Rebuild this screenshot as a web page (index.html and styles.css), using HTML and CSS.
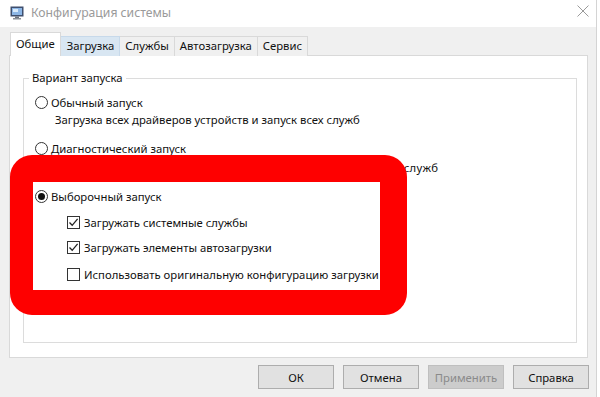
FILE: index.html
```html
<!DOCTYPE html>
<html lang="ru">
<head>
<meta charset="utf-8">
<title>Конфигурация системы</title>
<link rel="stylesheet" href="styles.css">
</head>
<body>
<div class="window">
  <div class="titlebar">
    <svg class="app-icon" width="14" height="14" viewBox="0 0 14 14">
      <rect x="0.5" y="0.5" width="13" height="10" fill="#3f4f6e"/>
      <rect x="2" y="2" width="10" height="7" fill="#8cb6e6"/>
      <rect x="3" y="3" width="5" height="3" fill="#d9ebfb"/>
      <rect x="5" y="10.5" width="4" height="1.5" fill="#6d7480"/>
      <rect x="3" y="12" width="8" height="1.5" fill="#8a9099"/>
    </svg>
    <span class="title">Конфигурация системы</span>
    <svg class="close" width="12" height="12" viewBox="0 0 12 12">
      <path d="M0.5 0.5 L11.5 11.5 M11.5 0.5 L0.5 11.5" stroke="#9a9a9a" stroke-width="1" fill="none"/>
    </svg>
  </div>

  <div class="body">
    <div class="tabs">
      <div class="tab selected">Общие</div>
      <div class="tab hover">Загрузка</div>
      <div class="tab">Службы</div>
      <div class="tab">Автозагрузка</div>
      <div class="tab">Сервис</div>
    </div>

    <div class="panel">
      <fieldset class="group">
        <legend>Вариант запуска</legend>
        <div class="options">
          <div class="row r1"><span class="radio"></span>Обычный запуск</div>
          <div class="desc d1">Загрузка всех драйверов устройств и запуск всех служб</div>
          <div class="row r2"><span class="radio"></span>Диагностический запуск</div>
          <div class="desc d2">Загрузка только основных драйверов устройств и основных служб</div>
          <div class="row r3"><span class="radio checked"></span>Выборочный запуск</div>
          <div class="sub">
            <div class="row c1"><span class="check on"><svg width="11" height="11" viewBox="0 0 11 11"><path d="M1.5 5.5 L4.2 8.3 L9.6 1.8" stroke="#222" stroke-width="1.3" fill="none"/></svg></span>Загружать системные службы</div>
            <div class="row c2"><span class="check on"><svg width="11" height="11" viewBox="0 0 11 11"><path d="M1.5 5.5 L4.2 8.3 L9.6 1.8" stroke="#222" stroke-width="1.3" fill="none"/></svg></span>Загружать элементы автозагрузки</div>
            <div class="row c3"><span class="check"></span>Использовать оригинальную конфигурацию загрузки</div>
          </div>
        </div>
      </fieldset>
      <div class="highlight"></div>
    </div>

    <div class="buttons">
      <button class="btn">ОК</button>
      <button class="btn">Отмена</button>
      <button class="btn disabled">Применить</button>
      <button class="btn">Справка</button>
    </div>
  </div>
</div>
</body>
</html>
```

FILE: styles.css
```css
* { box-sizing: border-box; }

html, body {
  margin: 0;
  padding: 0;
}

body {
  width: 600px;
  height: 397px;
  overflow: hidden;
  background: #ffffff;
  font-family: "Noto Sans", "Open Sans", sans-serif;
  font-size: 11.3px;
  color: #111;
}

.window {
  width: 597px;
  height: 397px;
  background: #f0f0f0;
  border-right: 1px solid #d4d4d4;
}

.titlebar {
  height: 27px;
  background: #ffffff;
  display: flex;
  align-items: center;
  padding-left: 10px;
  padding-right: 7px;
}

.app-icon { flex: none; margin-top: -2px; }

.title {
  margin-left: 7px;
  font-size: 12.2px;
  color: #9a9a9a;
  margin-top: -2px;
}

.close { margin-left: auto; margin-top: -6px; }

.body {
  padding: 5px 8px 0 9px;
}

.tabs {
  display: flex;
  align-items: flex-end;
  height: 24px;
  padding-left: 1px;
  position: relative;
  z-index: 1;
  margin-bottom: -1px;
}

.tab {
  height: 20px;
  line-height: 18px;
  padding: 0 5px;
  border: 1px solid #d9d9d9;
  border-left: none;
  border-bottom: none;
  background: #f0f0f0;
  color: #111;
  white-space: nowrap;
}

.tab.selected {
  height: 24px;
  line-height: 22px;
  background: #ffffff;
  border-left: 1px solid #d9d9d9;
  padding: 0 5px;
}

.tab.hover {
  background: #d8e6f2;
  border-color: #c7d9ea;
  padding-left: 6px;
}

.panel {
  position: relative;
  width: 579px;
  height: 303px;
  background: #ffffff;
  border: 1px solid #d9d9d9;
  padding: 14px 10px 14px 13px;
}

.group {
  margin: 0;
  height: 273px;
  border: 1px solid #dcdcdc;
  padding: 0;
  min-width: 0;
}

.group legend {
  margin-left: 5px;
  padding: 0 3px;
  line-height: 16px;
}

.options {
  display: flex;
  flex-direction: column;
  padding-left: 11px;
  padding-top: 7px;
}

.row {
  display: flex;
  align-items: center;
  height: 18px;
  white-space: nowrap;
}

.desc {
  height: 18px;
  line-height: 18px;
  padding-left: 20px;
  white-space: nowrap;
}

.d1 { margin-top: 0; }
.r2 { margin-top: 10px; }
.d2 { margin-top: 2px; letter-spacing: 0.28px; }
.r3 { margin-top: 10px; }

.sub {
  padding-left: 32px;
  display: flex;
  flex-direction: column;
}
.c1 { margin-top: 8px; }
.c2 { margin-top: 7px; }
.c3 { margin-top: 9px; }

.radio {
  width: 13px;
  height: 13px;
  border: 1px solid #333;
  border-radius: 50%;
  background: #fff;
  margin-right: 3px;
  flex: none;
  display: flex;
  align-items: center;
  justify-content: center;
}

.radio.checked::after {
  content: "";
  width: 7px;
  height: 7px;
  border-radius: 50%;
  background: #111;
}

.check {
  width: 13px;
  height: 13px;
  border: 1px solid #333;
  background: #fff;
  margin-right: 4px;
  flex: none;
  display: flex;
  align-items: center;
  justify-content: center;
}

.check svg { display: block; }

.highlight {
  position: absolute;
  left: 0;
  top: 99px;
  width: 397px;
  height: 160px;
  border-style: solid;
  border-color: #fe0000;
  border-width: 27px 27px 25px 23px;
  border-radius: 22px;
  pointer-events: none;
}

.buttons {
  display: flex;
  justify-content: flex-end;
  gap: 9px;
  padding-top: 7px;
  width: 580px;
}

.btn {
  width: 76px;
  height: 24px;
  background: #e1e1e1;
  border: 1px solid #adadad;
  font-family: "Noto Sans", "Open Sans", sans-serif;
  font-size: 11.3px;
  color: #111;
  padding: 0;
}

.btn.disabled {
  background: #cccccc;
  border-color: #bfbfbf;
  color: #8a8a8a;
}
```
